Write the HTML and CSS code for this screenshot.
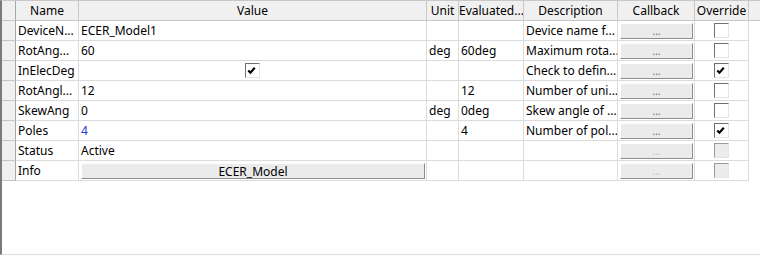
FILE: index.html
```html
<!DOCTYPE html>
<html lang="en">
<head>
    <meta charset="UTF-8">
    <title>Mask Parameters</title>
    <link rel="stylesheet" href="styles.css">
</head>
<body>
    <div class="param-grid">
        <div class="grid-row grid-header">
            <div class="row-head"></div>
            <div class="head-cell">Name</div>
            <div class="head-cell">Value</div>
            <div class="head-cell">Unit</div>
            <div class="head-cell">Evaluated...</div>
            <div class="head-cell">Description</div>
            <div class="head-cell">Callback</div>
            <div class="head-cell">Override</div>
            <div class="head-filler"></div>
        </div>

        <div class="grid-row">
            <div class="row-head"></div>
            <div class="cell">DeviceN...</div>
            <div class="cell">ECER_Model1</div>
            <div class="cell"></div>
            <div class="cell"></div>
            <div class="cell">Device name f...</div>
            <div class="cell cell-btn"><button class="btn-callback">...</button></div>
            <div class="cell cell-center"><span class="check-box"></span></div>
        </div>

        <div class="grid-row">
            <div class="row-head"></div>
            <div class="cell">RotAng...</div>
            <div class="cell">60</div>
            <div class="cell">deg</div>
            <div class="cell">60deg</div>
            <div class="cell">Maximum rota...</div>
            <div class="cell cell-btn"><button class="btn-callback">...</button></div>
            <div class="cell cell-center"><span class="check-box"></span></div>
        </div>

        <div class="grid-row">
            <div class="row-head"></div>
            <div class="cell">InElecDeg</div>
            <div class="cell cell-center">
                <span class="check-box">
                    <svg viewBox="0 0 15 15" width="15" height="15"><polyline points="3.5,7.5 5.8,9.8 10.5,4.5" fill="none" stroke="#000" stroke-width="2.3"/></svg>
                </span>
            </div>
            <div class="cell"></div>
            <div class="cell"></div>
            <div class="cell">Check to defin...</div>
            <div class="cell cell-btn"><button class="btn-callback">...</button></div>
            <div class="cell cell-center">
                <span class="check-box">
                    <svg viewBox="0 0 15 15" width="15" height="15"><polyline points="3.5,7.5 5.8,9.8 10.5,4.5" fill="none" stroke="#000" stroke-width="2.3"/></svg>
                </span>
            </div>
        </div>

        <div class="grid-row">
            <div class="row-head"></div>
            <div class="cell">RotAngl...</div>
            <div class="cell">12</div>
            <div class="cell"></div>
            <div class="cell">12</div>
            <div class="cell">Number of uni...</div>
            <div class="cell cell-btn"><button class="btn-callback">...</button></div>
            <div class="cell cell-center"><span class="check-box"></span></div>
        </div>

        <div class="grid-row">
            <div class="row-head"></div>
            <div class="cell">SkewAng</div>
            <div class="cell">0</div>
            <div class="cell">deg</div>
            <div class="cell">0deg</div>
            <div class="cell">Skew angle of ...</div>
            <div class="cell cell-btn"><button class="btn-callback">...</button></div>
            <div class="cell cell-center"><span class="check-box"></span></div>
        </div>

        <div class="grid-row">
            <div class="row-head"></div>
            <div class="cell">Poles</div>
            <div class="cell value-link">4</div>
            <div class="cell"></div>
            <div class="cell">4</div>
            <div class="cell">Number of pol...</div>
            <div class="cell cell-btn"><button class="btn-callback">...</button></div>
            <div class="cell cell-center">
                <span class="check-box">
                    <svg viewBox="0 0 15 15" width="15" height="15"><polyline points="3.5,7.5 5.8,9.8 10.5,4.5" fill="none" stroke="#000" stroke-width="2.3"/></svg>
                </span>
            </div>
        </div>

        <div class="grid-row">
            <div class="row-head"></div>
            <div class="cell">Status</div>
            <div class="cell">Active</div>
            <div class="cell"></div>
            <div class="cell"></div>
            <div class="cell"></div>
            <div class="cell cell-btn"><button class="btn-callback" disabled>...</button></div>
            <div class="cell cell-center"><span class="check-box check-disabled"></span></div>
        </div>

        <div class="grid-row">
            <div class="row-head"></div>
            <div class="cell">Info</div>
            <div class="cell cell-btn"><button class="btn-value">ECER_Model</button></div>
            <div class="cell"></div>
            <div class="cell"></div>
            <div class="cell"></div>
            <div class="cell cell-btn"><button class="btn-callback" disabled>...</button></div>
            <div class="cell cell-center"><span class="check-box check-disabled"></span></div>
        </div>
    </div>
</body>
</html>
```

FILE: styles.css
```css
body {
    margin: 0;
    background-color: #fff;
    font-family: "Noto Sans", Arial, sans-serif;
    font-size: 12px;
    color: #000;
}
.param-grid {
    width: 760px;
    height: 255px;
    box-sizing: border-box;
    border-left: 2px solid #7a7a7a;
    border-top: 1px solid #c8c8c8;
    border-bottom: 1px solid #dcdcdc;
    overflow: hidden;
}
.grid-row {
    display: grid;
    grid-template-columns: 14px 63px 348px 32px 65px 94px 77px 54px 1fr;
    height: 20px;
}
.row-head {
    box-sizing: border-box;
    background-color: #f0f0f0;
    border-right: 1px solid #a8a8a8;
    border-bottom: 1px solid #c4c4c4;
}
.grid-header {
    background-color: #f0f0f0;
}
.head-cell {
    box-sizing: border-box;
    border-right: 1px solid #c8c8c8;
    border-bottom: 1px solid #c8c8c8;
    text-align: center;
    line-height: 19px;
    white-space: nowrap;
    overflow: hidden;
}
.head-filler {
    border-bottom: 1px solid #c8c8c8;
}
.cell {
    box-sizing: border-box;
    border-right: 1px solid #dcdcdc;
    border-bottom: 1px solid #dcdcdc;
    padding: 0 2px;
    line-height: 19px;
    white-space: nowrap;
    overflow: hidden;
}
.cell-center {
    display: flex;
    justify-content: center;
    align-items: center;
}
.cell-btn {
    display: flex;
    align-items: flex-start;
    padding: 2px 1px 0 2px;
}
.value-link {
    color: #2838d0;
}
.btn-callback,
.btn-value {
    flex: 1;
    height: 16px;
    margin: 0;
    padding: 0;
    box-sizing: border-box;
    background-color: #ebebeb;
    border: 1px solid #fff;
    border-right-color: #8c8c8c;
    border-bottom-color: #8c8c8c;
    font-family: "Noto Sans", Arial, sans-serif;
    line-height: 13px;
}
.btn-callback {
    font-size: 10px;
    color: #666;
}
.btn-callback:disabled {
    color: #c0c0c0;
}
.btn-value {
    font-size: 12px;
    color: #000;
}
.check-box {
    width: 15px;
    height: 15px;
    box-sizing: border-box;
    background-color: #fff;
    border: 1px solid #e4e4e4;
    border-top-color: #707070;
    border-left-color: #707070;
    display: flex;
}
.check-box svg {
    margin: -1px 0 0 -1px;
}
.check-disabled {
    background-color: #ececec;
    border-top-color: #9a9a9a;
    border-left-color: #9a9a9a;
}
```
